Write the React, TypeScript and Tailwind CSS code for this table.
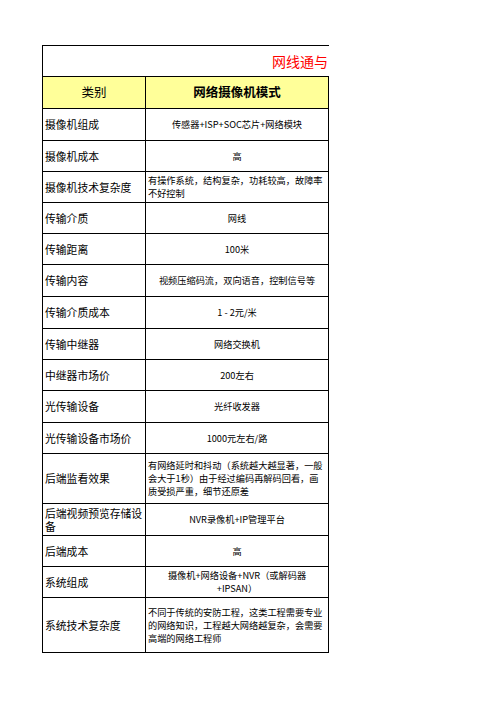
const FONT = '[font-family:"Noto_Sans_CJK_SC","Noto_Sans",sans-serif]';

type Row = {
  label: string;
  value: string[];
  h: number;
  left?: boolean;
};

const rows: Row[] = [
  { label: '摄像机组成', value: ['传感器+ISP+SOC芯片+网络模块'], h: 32 },
  { label: '摄像机成本', value: ['高'], h: 31 },
  { label: '摄像机技术复杂度', value: ['有操作系统，结构复杂，功耗较高，故障率', '不好控制'], h: 31, left: true },
  { label: '传输介质', value: ['网线'], h: 31 },
  { label: '传输距离', value: ['100米'], h: 31 },
  { label: '传输内容', value: ['视频压缩码流，双向语音，控制信号等'], h: 32 },
  { label: '传输介质成本', value: ['1 - 2元/米'], h: 32 },
  { label: '传输中继器', value: ['网络交换机'], h: 31 },
  { label: '中继器市场价', value: ['200左右'], h: 31 },
  { label: '光传输设备', value: ['光纤收发器'], h: 32 },
  { label: '光传输设备市场价', value: ['1000元左右/路'], h: 31 },
  {
    label: '后端监看效果',
    value: ['有网络延时和抖动（系统越大越显著，一般', '会大于1秒）由于经过编码再解码回看，画', '质受损严重，细节还原差'],
    h: 50,
    left: true,
  },
  { label: '后端视频预览存储设备', value: ['NVR录像机+IP管理平台'], h: 32 },
  { label: '后端成本', value: ['高'], h: 31 },
  { label: '系统组成', value: ['摄像机+网络设备+NVR（或解码器', '+IPSAN）'], h: 31 },
  {
    label: '系统技术复杂度',
    value: ['不同于传统的安防工程，这类工程需要专业', '的网络知识，工程越大网络越复杂，会需要', '高端的网络工程师'],
    h: 55,
    left: true,
  },
];

export default function App() {
  return (
    <div className={`min-h-[702px] w-[496px] bg-white pt-[45px] pl-[42px] text-black ${FONT}`}>
      <div className="w-[287px] border-t border-l border-black">
        {/* title row */}
        <div className="flex h-[31px] items-center justify-end overflow-hidden border-b border-black pr-[1px]">
          <span className="whitespace-nowrap text-[14px] leading-[20px] text-[#ff0000]">网线通与</span>
        </div>

        {/* header */}
        <div className="flex h-[32px] border-b border-black bg-[#ffff99]">
          <div className="flex w-[103px] shrink-0 items-center justify-center border-r border-black text-[12.5px]">
            类别
          </div>
          <div className="flex flex-1 items-center justify-center border-r border-black text-[12.5px] font-bold">
            网络摄像机模式
          </div>
        </div>

        {rows.map((r) => (
          <div key={r.label} className="flex border-b border-black" style={{ height: r.h }}>
            <div className="flex w-[103px] shrink-0 items-center border-r border-black pl-[2px] text-[10.8px] leading-[13px]">
              <span>{r.label}</span>
            </div>
            <div
              className={
                r.left
                  ? 'flex flex-1 flex-col justify-center border-r border-black pl-[2px] text-[9.2px] leading-[13px] whitespace-nowrap'
                  : 'flex flex-1 flex-col items-center justify-center border-r border-black text-center text-[9.2px] leading-[13px] whitespace-nowrap'
              }
            >
              {r.value.map((v) => (
                <span key={v}>{v}</span>
              ))}
            </div>
          </div>
        ))}
      </div>
    </div>
  );
}
